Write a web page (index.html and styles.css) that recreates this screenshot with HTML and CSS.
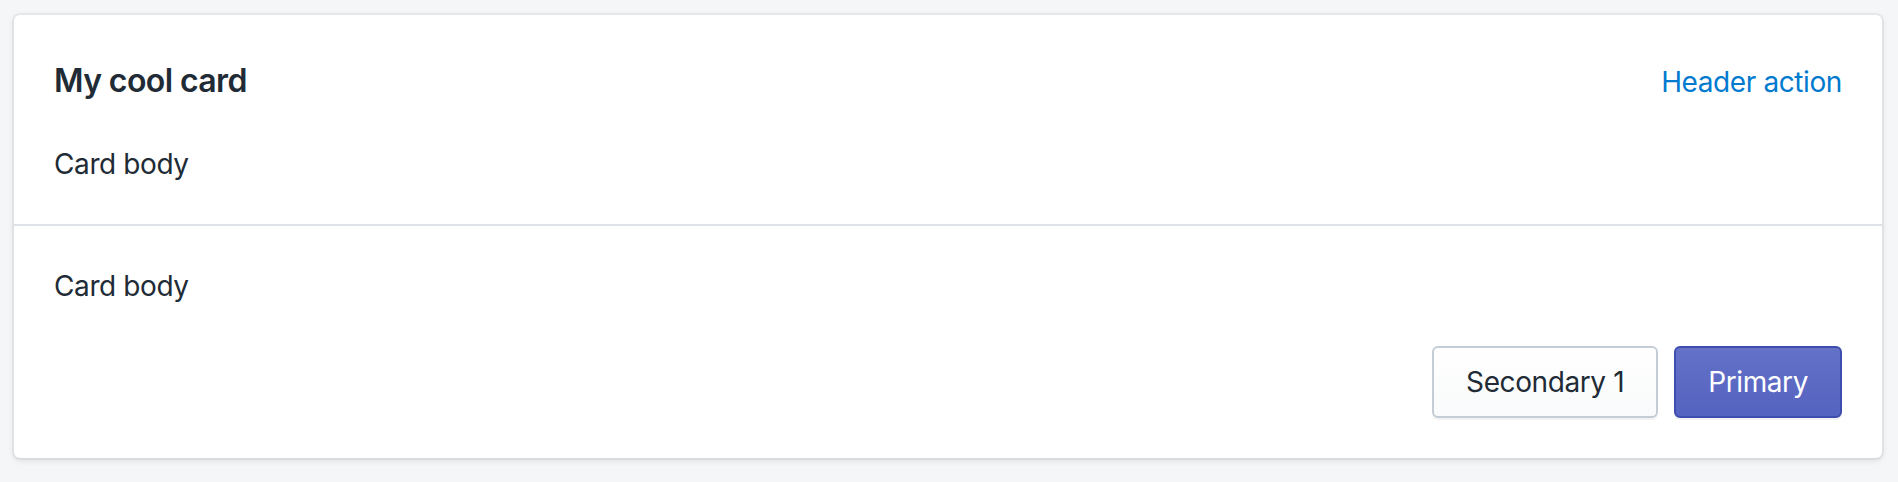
FILE: index.html
```html
<!DOCTYPE html>
<html lang="en">
<head>
<meta charset="utf-8">
<title>My cool card</title>
<link rel="stylesheet" href="styles.css">
</head>
<body>
  <div class="card">
    <div class="card-header">
      <h2 class="card-title">My cool card</h2>
      <a class="header-action" href="#">Header action</a>
    </div>
    <div class="card-section card-section-first">
      <p class="card-text">Card body</p>
    </div>
    <div class="card-section card-section-bordered">
      <p class="card-text">Card body</p>
    </div>
    <div class="card-footer">
      <button class="btn btn-secondary" type="button">Secondary 1</button>
      <button class="btn btn-primary" type="button">Primary</button>
    </div>
  </div>
</body>
</html>
```

FILE: styles.css
```css
html, body {
  margin: 0;
  padding: 0;
}
body {
  background: #f4f6f8;
  padding: 15px 16px 24px 14px;
  font-family: Inter, "Noto Sans", Roboto, sans-serif;
  color: #212b36;
  -webkit-font-smoothing: antialiased;
}
.card {
  background: #ffffff;
  border-radius: 6px;
  box-shadow: 0 0 0 2px rgba(63, 63, 68, 0.05), 0 2px 6px 0 rgba(63, 63, 68, 0.15);
  overflow: hidden;
}
.card-header {
  display: flex;
  align-items: baseline;
  justify-content: space-between;
  padding: 42px 40px 0;
}
.card-title {
  margin: 0;
  font-size: 32px;
  line-height: 48px;
  font-weight: 600;
  letter-spacing: -0.6px;
  color: #212b36;
}
.header-action {
  font-size: 28px;
  line-height: 40px;
  letter-spacing: -0.4px;
  color: #007ace;
  text-decoration: none;
}
.card-section {
  padding: 40px;
}
.card-section-first {
  padding-top: 39px;
}
.card-section-bordered {
  border-top: 2px solid #dfe3e8;
}
.card-text {
  margin: 0;
  font-size: 28px;
  line-height: 40px;
  letter-spacing: -0.4px;
}
.card-footer {
  display: flex;
  justify-content: flex-end;
  gap: 16px;
  padding: 0 40px 40px;
}
.btn {
  font-family: inherit;
  font-size: 28px;
  line-height: 40px;
  letter-spacing: -0.4px;
  min-height: 72px;
  padding: 14px 32px;
  border-radius: 6px;
  cursor: pointer;
}
.btn-secondary {
  background: linear-gradient(to bottom, #ffffff, #f9fafb);
  border: 2px solid #c4cdd5;
  box-shadow: 0 2px 0 0 rgba(22, 29, 37, 0.05);
  color: #212b36;
}
.btn-primary {
  background: linear-gradient(to bottom, #6371c7, #5563c1);
  border: 2px solid #3f4eae;
  box-shadow: inset 0 2px 0 0 #6774c8, 0 2px 0 0 rgba(22, 29, 37, 0.05);
  color: #ffffff;
}
```
